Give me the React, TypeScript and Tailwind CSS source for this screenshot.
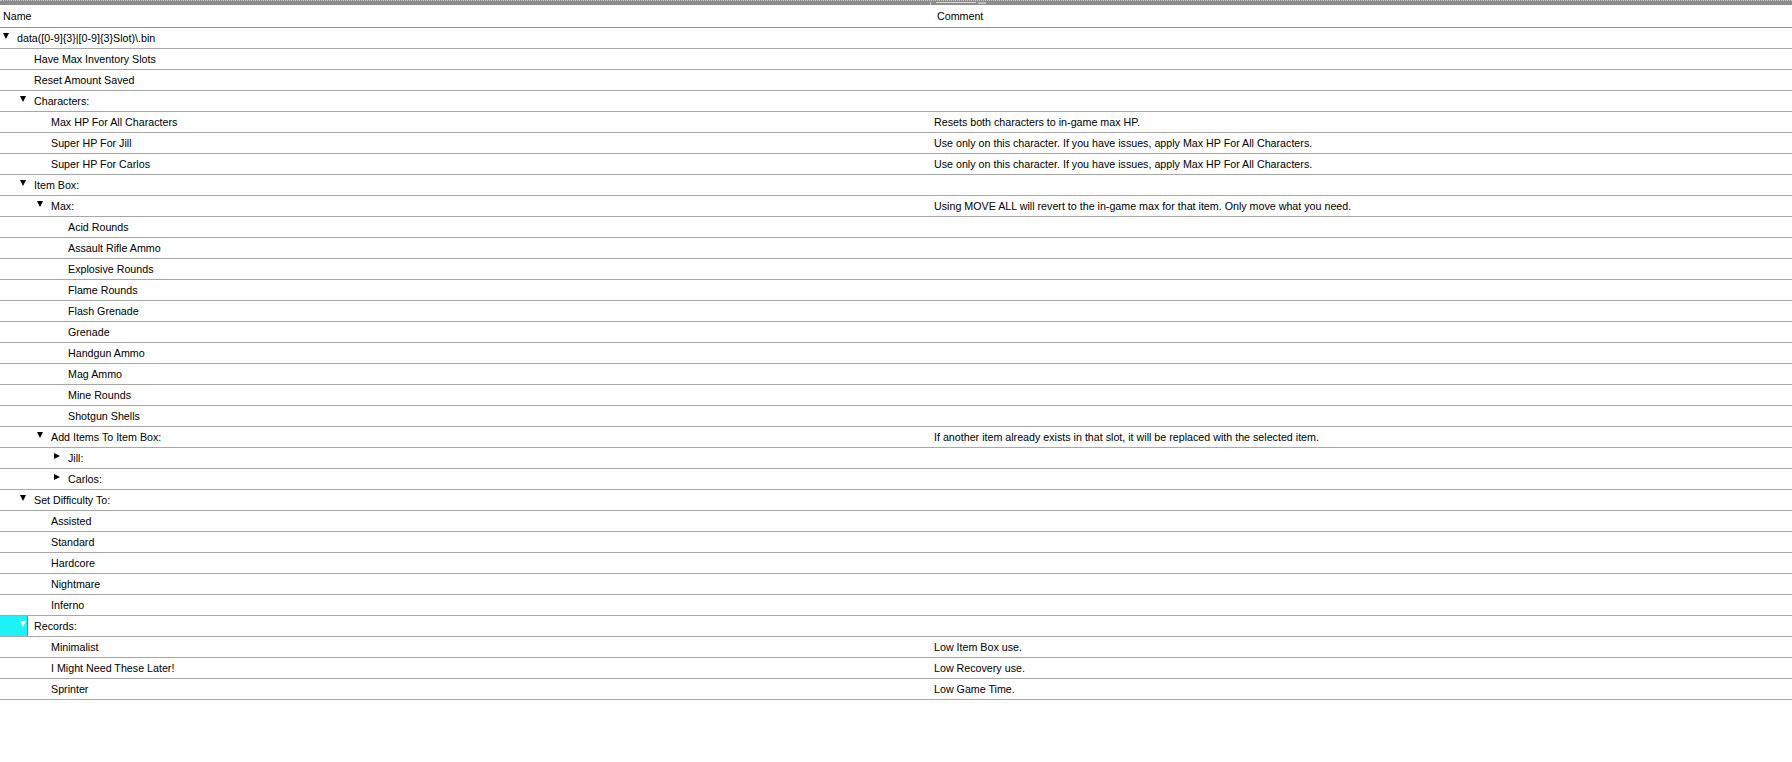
import React from 'react';

type Row = {
  name: string;
  level: number;
  kind: 'open' | 'closed' | 'leaf';
  comment?: string;
  selected?: boolean;
};

const useOnly = 'Use only on this character. If you have issues, apply Max HP For All Characters.';

const rows: Row[] = [
  { name: 'data([0-9]{3}|[0-9]{3}Slot)\\.bin', level: 0, kind: 'open' },
  { name: 'Have Max Inventory Slots', level: 1, kind: 'leaf' },
  { name: 'Reset Amount Saved', level: 1, kind: 'leaf' },
  { name: 'Characters:', level: 1, kind: 'open' },
  { name: 'Max HP For All Characters', level: 2, kind: 'leaf', comment: 'Resets both characters to in-game max HP.' },
  { name: 'Super HP For Jill', level: 2, kind: 'leaf', comment: useOnly },
  { name: 'Super HP For Carlos', level: 2, kind: 'leaf', comment: useOnly },
  { name: 'Item Box:', level: 1, kind: 'open' },
  { name: 'Max:', level: 2, kind: 'open', comment: 'Using MOVE ALL will revert to the in-game max for that item. Only move what you need.' },
  { name: 'Acid Rounds', level: 3, kind: 'leaf' },
  { name: 'Assault Rifle Ammo', level: 3, kind: 'leaf' },
  { name: 'Explosive Rounds', level: 3, kind: 'leaf' },
  { name: 'Flame Rounds', level: 3, kind: 'leaf' },
  { name: 'Flash Grenade', level: 3, kind: 'leaf' },
  { name: 'Grenade', level: 3, kind: 'leaf' },
  { name: 'Handgun Ammo', level: 3, kind: 'leaf' },
  { name: 'Mag Ammo', level: 3, kind: 'leaf' },
  { name: 'Mine Rounds', level: 3, kind: 'leaf' },
  { name: 'Shotgun Shells', level: 3, kind: 'leaf' },
  { name: 'Add Items To Item Box:', level: 2, kind: 'open', comment: 'If another item already exists in that slot, it will be replaced with the selected item.' },
  { name: 'Jill:', level: 3, kind: 'closed' },
  { name: 'Carlos:', level: 3, kind: 'closed' },
  { name: 'Set Difficulty To:', level: 1, kind: 'open' },
  { name: 'Assisted', level: 2, kind: 'leaf' },
  { name: 'Standard', level: 2, kind: 'leaf' },
  { name: 'Hardcore', level: 2, kind: 'leaf' },
  { name: 'Nightmare', level: 2, kind: 'leaf' },
  { name: 'Inferno', level: 2, kind: 'leaf' },
  { name: 'Records:', level: 1, kind: 'open', selected: true },
  { name: 'Minimalist', level: 2, kind: 'leaf', comment: 'Low Item Box use.' },
  { name: 'I Might Need These Later!', level: 2, kind: 'leaf', comment: 'Low Recovery use.' },
  { name: 'Sprinter', level: 2, kind: 'leaf', comment: 'Low Game Time.' },
];

// indent widths per level (17px per step), written out so tailwind picks them up
const indent = ['w-[0px]', 'w-[17px]', 'w-[34px]', 'w-[51px]'];

const Arrow: React.FC<{ open: boolean; white?: boolean }> = ({ open, white }) => (
  <svg width="6" height="6" viewBox="0 0 6 6" className="block">
    {open ? (
      <polygon points="0,0 6,0 3,6" fill={white ? '#ffffff' : '#000000'} />
    ) : (
      <polygon points="0,0 6,3 0,6" fill={white ? '#ffffff' : '#000000'} />
    )}
  </svg>
);

export default function App() {
  return (
    <div className="w-[1792px] h-[762px] bg-white text-[10.7px] text-black overflow-hidden font-['Liberation_Sans',Arial,sans-serif]">
      {/* top splitter strip */}
      <div className="h-[5px] bg-[#8c8c8c] border-t border-dotted border-[#c8c8c8] relative">
        <div className="absolute left-[930px] top-[1px] w-[1px] h-[3px] bg-[#d0d0d0]" />
        <div className="absolute left-[936px] top-[1px] w-[40px] h-[1px] bg-[#d8d8d8]" />
        <div className="absolute left-[978px] top-[1px] w-[8px] h-[2px] bg-[#bcbcbc]" />
      </div>

      {/* header */}
      <div className="flex h-[23px] border-b border-[#909090] items-center pt-[1px]">
        <div className="w-[931px] pl-[3px] leading-none">Name</div>
        <div className="flex-1 pl-[6px] leading-none">Comment</div>
      </div>

      {rows.map((r, i) => (
        <div key={i} className="flex h-[21px] border-b border-[#a8a8a8]">
          <div className="w-[931px] flex items-center relative">
            {r.selected && <div className="absolute left-0 top-0 w-[28px] h-full bg-[#1cf2f8] border-r border-[#6a8a8a]" />}
            <div className={`${indent[r.level]} shrink-0`} />
            <div className="w-[14px] shrink-0 pl-[3px] relative -mt-[5px]">
              {r.kind !== 'leaf' && <Arrow open={r.kind === 'open'} white={r.selected} />}
            </div>
            <span className="relative pl-[3px] leading-none whitespace-nowrap">{r.name}</span>
          </div>
          <div className="flex-1 flex items-center pl-[3px] leading-none whitespace-nowrap">{r.comment}</div>
        </div>
      ))}
    </div>
  );
}
